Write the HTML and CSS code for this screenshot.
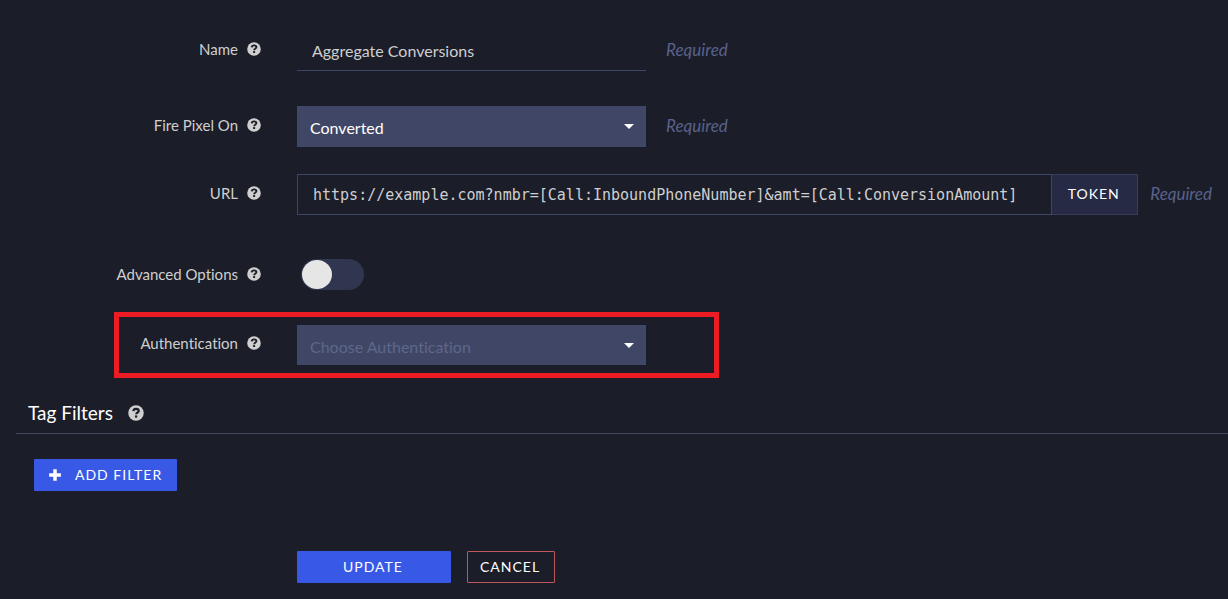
FILE: index.html
```html
<!DOCTYPE html>
<html lang="en">
<head>
  <meta charset="UTF-8">
  <meta name="viewport" content="width=device-width, initial-scale=1.0">
  <title>Edit Pixel</title>
  <link rel="stylesheet" href="styles.css">
</head>
<body>
  <svg class="sprite" aria-hidden="true">
    <symbol id="help" viewBox="0 0 14 14">
      <circle cx="7" cy="7" r="6.8" fill="currentColor"/>
      <path class="mark" d="M4.7 5.3C4.9 3.9 5.8 3.4 7 3.4c1.4 0 2.4.7 2.4 1.8C9.4 6.6 7.2 6.5 7.2 8.2" fill="none" stroke-width="1.9"/>
      <rect class="dot" x="6.1" y="9.1" width="2" height="1.9"/>
    </symbol>
  </svg>

  <form id="pixelForm">
    <div class="row">
      <label for="name">Name <svg class="help"><use href="#help"/></svg></label>
      <div class="field">
        <input type="text" id="name" class="line-input" value="Aggregate Conversions">
        <em class="required">Required</em>
      </div>
    </div>

    <div class="row row-select">
      <label for="firePixel">Fire Pixel On <svg class="help"><use href="#help"/></svg></label>
      <div class="field">
        <div class="select">
          <select id="firePixel">
            <option selected>Converted</option>
          </select>
        </div>
        <em class="required">Required</em>
      </div>
    </div>

    <div class="row row-url">
      <label for="url">URL <svg class="help"><use href="#help"/></svg></label>
      <div class="field">
        <div class="input-group">
          <input type="text" id="url" value="https://example.com?nmbr=[Call:InboundPhoneNumber]&amp;amt=[Call:ConversionAmount]">
          <button type="button" class="token">TOKEN</button>
        </div>
        <em class="required">Required</em>
      </div>
    </div>

    <div class="row row-advanced">
      <label for="advanced">Advanced Options <svg class="help"><use href="#help"/></svg></label>
      <div class="field">
        <input type="checkbox" id="advanced" class="toggle">
      </div>
    </div>

    <div class="row row-auth">
      <label for="auth">Authentication <svg class="help"><use href="#help"/></svg></label>
      <div class="field">
        <div class="select">
          <select id="auth" class="empty">
            <option selected>Choose Authentication</option>
          </select>
        </div>
      </div>
      <div class="highlight"></div>
    </div>

    <section class="filters">
      <h2>Tag Filters <svg class="help"><use href="#help"/></svg></h2>
      <button type="button" class="btn add">
        <svg class="plus" viewBox="0 0 12 12"><path d="M6 1v10M1 6h10" stroke="currentColor" stroke-width="3"/></svg>
        ADD FILTER
      </button>
    </section>

    <div class="actions">
      <button type="submit" class="btn update">UPDATE</button>
      <button type="button" class="btn cancel">CANCEL</button>
    </div>
  </form>
</body>
</html>
```
FILE: styles.css
```css
* {
  box-sizing: border-box;
}

body {
  margin: 0;
  background-color: #1b1d29;
  color: #cfcfcf;
  font-family: Lato, 'Open Sans', sans-serif;
  font-size: 15px;
  font-variant-ligatures: none;
}

input,
select,
button {
  margin: 0;
  font-family: inherit;
  font-variant-ligatures: none;
  color: inherit;
  border-radius: 0;
}

form {
  padding: 30px 0 16px;
}

.sprite {
  position: absolute;
  width: 0;
  height: 0;
}

.mark {
  stroke: #1b1d29;
}

.dot {
  fill: #1b1d29;
}

.row {
  display: grid;
  grid-template-columns: 261px 1fr;
  column-gap: 36px;
  align-items: center;
  position: relative;
}

.row label {
  display: flex;
  justify-content: flex-end;
  align-items: center;
  gap: 9px;
  padding-bottom: 3px;
}

.help {
  width: 14px;
  height: 14px;
  flex: none;
}

.field {
  display: flex;
  align-items: center;
  padding-right: 16px;
}

.required {
  margin-left: 20px;
  padding-bottom: 1px;
  color: #59628a;
  font-size: 17px;
  line-height: 20px;
}

.line-input {
  width: 349px;
  height: 41px;
  padding: 0 15px;
  background: none;
  border: none;
  border-bottom: 1px solid #3f4665;
  font-size: 16px;
}

.row-select {
  margin-top: 35px;
}

.select {
  position: relative;
  width: 349px;
}

.select select {
  display: block;
  width: 100%;
  height: 41px;
  padding: 1px 30px 0 13px;
  appearance: none;
  background-color: #404665;
  border: none;
  color: #fff;
  font-size: 16px;
}

.select select.empty {
  height: 40px;
  padding-top: 2px;
  color: #5f678a;
}

.select::after {
  content: "";
  position: absolute;
  right: 12px;
  top: 18px;
  border: 5px solid transparent;
  border-top-color: #fff;
  border-bottom: none;
  pointer-events: none;
}

.row-url {
  margin-top: 27px;
}

.input-group {
  display: flex;
  flex: 1;
}

.input-group input {
  flex: 1;
  min-width: 0;
  height: 41px;
  padding: 0 15px;
  background: none;
  border: 1px solid #3f4665;
  font-family: 'DejaVu Sans Mono', monospace;
  font-size: 15px;
}

.token {
  width: 86px;
  padding: 0 2px 2px 0;
  background-color: #262a45;
  border: 1px solid #363c5a;
  border-left: none;
  color: #fff;
  font-size: 14px;
  letter-spacing: 1px;
}

.row-url .required {
  margin-left: 12px;
}

.row-advanced {
  margin-top: 44px;
}

.row-advanced label {
  padding-bottom: 1px;
}

.toggle {
  display: flex;
  width: 63px;
  height: 31px;
  margin-left: 4px;
  padding: 1px;
  appearance: none;
  background-color: #30364f;
  border-radius: 16px;
}

.toggle::before {
  content: "";
  width: 30px;
  height: 29px;
  background-color: #e6e6e6;
  border-radius: 50%;
}

.toggle:checked {
  justify-content: flex-end;
  background-color: #3858e6;
}

.row-auth {
  margin-top: 35px;
}

.row-auth label {
  padding-bottom: 4px;
}

.highlight {
  position: absolute;
  left: 114px;
  top: -13px;
  width: 605px;
  height: 66px;
  border: 5px solid #ed1c24;
  pointer-events: none;
}

.filters {
  margin: 28px 0 0 16px;
}

.filters h2 {
  display: flex;
  align-items: center;
  gap: 15px;
  height: 41px;
  margin: 0 0 25px;
  padding: 0 12px 1px;
  border-bottom: 1px solid #44475a;
  color: #fff;
  font-size: 19px;
  font-weight: normal;
}

.filters .help {
  width: 16px;
  height: 16px;
  color: #cfcfcf;
}

.btn {
  height: 32px;
  padding: 0 2px 2px 0;
  background-color: #3858e6;
  border: none;
  border-radius: 1px;
  color: #fff;
  font-size: 14px;
  letter-spacing: 1px;
}

.add {
  display: flex;
  align-items: center;
  gap: 13px;
  margin-left: 18px;
  padding: 0 15px 1px 14px;
}

.plus {
  width: 14px;
  height: 14px;
}

.actions {
  display: flex;
  gap: 16px;
  margin: 60px 0 0 297px;
}

.update {
  width: 154px;
}

.cancel {
  width: 88px;
  background: none;
  border: 1px solid #c0575b;
}
```
